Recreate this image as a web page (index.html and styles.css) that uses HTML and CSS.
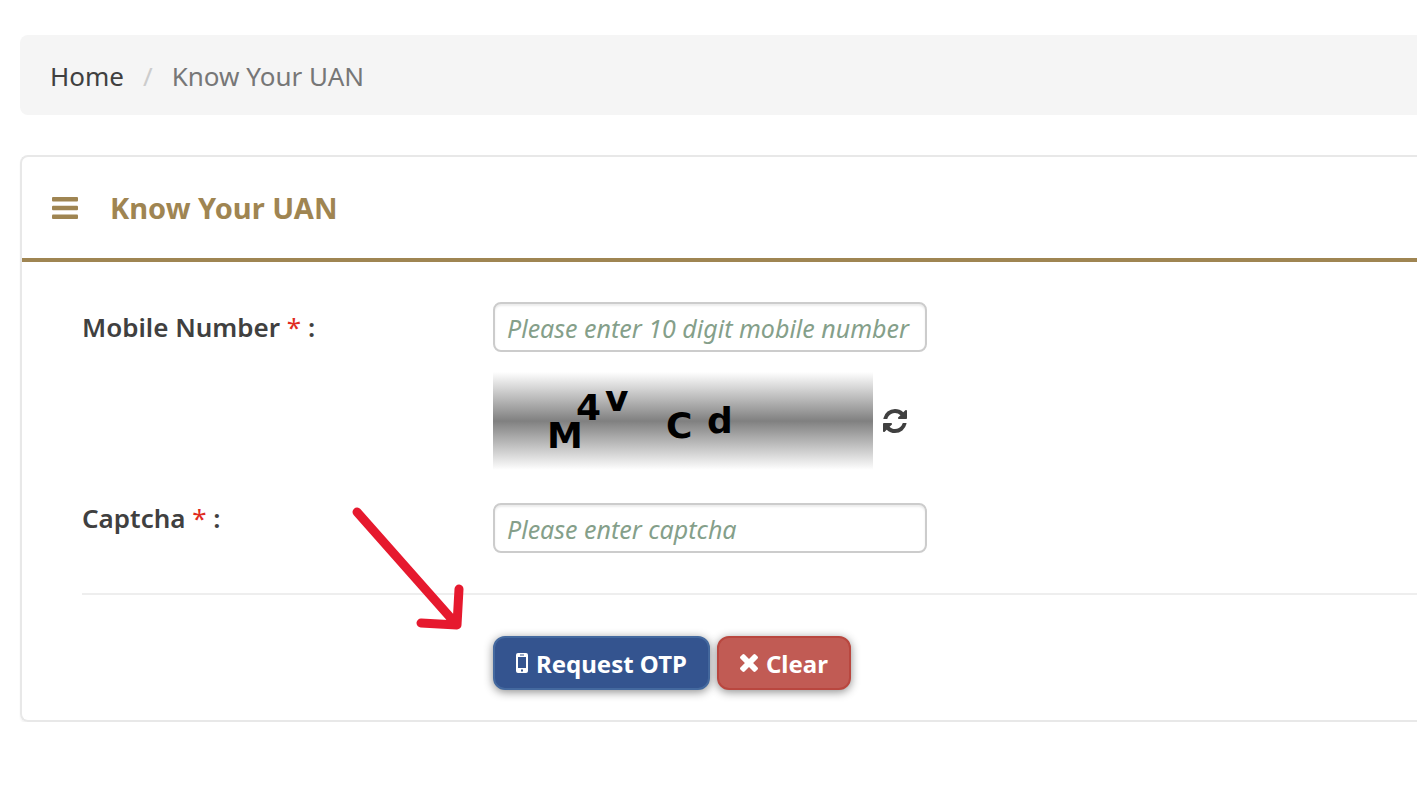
FILE: index.html
```html
<!DOCTYPE html>
<html lang="en">
<head>
    <meta charset="UTF-8">
    <meta name="viewport" content="width=device-width, initial-scale=1.0">
    <title>Know Your UAN</title>
    <link rel="stylesheet" href="styles.css">
</head>
<body>
    <nav class="breadcrumb" aria-label="Breadcrumb">
        <a href="#">Home</a>
        <span class="divider">/</span>
        <span class="current">Know Your UAN</span>
    </nav>

    <main class="panel">
        <header class="panel-heading">
            <svg class="icon-bars" viewBox="0 0 26 22" aria-hidden="true">
                <rect y="0" width="26" height="4.500" rx="1"/>
                <rect y="8.700" width="26" height="4.500" rx="1"/>
                <rect y="17.500" width="26" height="4.500" rx="1"/>
            </svg>
            <h1>Know Your UAN</h1>
        </header>

        <form class="panel-body">
            <div class="form-row">
                <label for="mobile">Mobile Number <span class="required">*</span> :</label>
                <input type="text" id="mobile" placeholder="Please enter 10 digit mobile number">
            </div>

            <div class="form-row captcha-row">
                <div class="captcha">
                    <svg class="captcha-image" viewBox="0 0 380 98" role="img" aria-label="Captcha">
                        <text x="54" y="76">M</text>
                        <text x="83" y="48">4</text>
                        <text x="112" y="39">v</text>
                        <text x="173" y="66">C</text>
                        <text x="214" y="61">d</text>
                    </svg>
                    <button type="button" class="refresh" aria-label="Refresh captcha">
                        <svg viewBox="0 0 1536 1536" aria-hidden="true">
                            <path d="M1511 928q0 5-1 7-64 268-268 434.500t-478 166.500q-146 0-282.500-55t-243.500-157l-129 129q-19 19-45 19t-45-19-19-45v-448q0-26 19-45t45-19h448q26 0 45 19t19 45-19 45l-137 137q71 66 161 102t187 36q134 0 250-65t186-179q11-17 53-117 8-23 30-23h192q13 0 22.500 9.500t9.500 22.500zm25-800v448q0 26-19 45t-45 19h-448q-26 0-45-19t-19-45 19-45l138-138q-148-137-349-137-134 0-250 65t-186 179q-11 17-53 117-8 23-30 23h-199q-13 0-22.500-9.500t-9.500-22.500v-7q65-268 270-434.500t480-166.500q146 0 284 55.500t245 156.500l130-129q19-19 45-19t45 19 19 45z"/>
                        </svg>
                    </button>
                </div>
            </div>

            <div class="form-row captcha-entry">
                <label for="captcha">Captcha <span class="required">*</span> :</label>
                <input type="text" id="captcha" placeholder="Please enter captcha">
            </div>

            <div class="form-actions">
                <button type="button" class="btn btn-primary">
                    <svg class="icon-mobile" viewBox="0 0 12 20" aria-hidden="true">
                        <path fill-rule="evenodd" d="M2 0h8a2 2 0 0 1 2 2v16a2 2 0 0 1-2 2H2a2 2 0 0 1-2-2V2a2 2 0 0 1 2-2zM2 4v11h8V4zM4 1.500v1h4v-1zM5 16.500v2h2v-2z"/>
                    </svg>
                    Request OTP
                </button>
                <button type="reset" class="btn btn-danger">
                    <svg class="icon-times" viewBox="302 366 1188 1188" aria-hidden="true">
                        <path d="M1490 1322q0 40-28 68l-136 136q-28 28-68 28t-68-28l-294-294-294 294q-28 28-68 28t-68-28l-136-136q-28-28-28-68t28-68l294-294-294-294q-28-28-28-68t28-68l136-136q28-28 68-28t68 28l294 294 294-294q28-28 68-28t68 28l136 136q28 28 28 68t-28 68l-294 294 294 294q28 28 28 68z"/>
                    </svg>
                    Clear
                </button>
            </div>
        </form>

        <!-- Pointer to the Request OTP button -->
        <svg class="arrow" viewBox="0 0 112 124" aria-hidden="true">
            <path d="M5 5L105 118M69 116L105 118L107 82"/>
        </svg>
    </main>
</body>
</html>
```

FILE: styles.css
```css
* {
    box-sizing: border-box;
}
body {
    margin: 0;
    padding: 35px 0 0 20px;
    font-family: "Noto Sans", "Open Sans", sans-serif;
    font-size: 26px;
    color: #404040;
    background-color: #fff;
}

/* Breadcrumb */
.breadcrumb {
    display: flex;
    align-items: center;
    height: 80px;
    padding: 2px 30px 0;
    margin-bottom: 40px;
    background-color: #f5f5f5;
    border-radius: 8px 0 0 8px;
}
.breadcrumb a {
    color: #404040;
    text-decoration: none;
}
.divider {
    padding: 0 19px;
    color: #ccc;
}
.current {
    color: #777;
}

/* Panel */
.panel {
    position: relative;
    border: 2px solid #e8e8e8;
    border-right: 0;
    border-radius: 8px 0 0 8px;
    box-shadow: 0 2px 2px rgba(0, 0, 0, 0.05);
}
.panel-heading {
    display: flex;
    align-items: center;
    gap: 32px;
    height: 105px;
    padding: 0 30px;
    color: #9f8552;
    border-bottom: 4px solid #9f8552;
}
.panel-heading h1 {
    margin: 0;
    font-size: 29px;
    font-weight: 700;
}
.icon-bars {
    width: 26px;
    height: 22px;
    fill: currentColor;
}
.panel-body {
    padding: 40px 0 30px 60px;
}

/* Form */
.form-row {
    display: grid;
    grid-template-columns: 411px 434px;
}
.form-row label {
    font-weight: 600;
    line-height: 50px;
}
.required {
    color: #e02b20;
    font-weight: 400;
}
.form-row input {
    width: 100%;
    height: 50px;
    padding: 2px 12px 0;
    font-family: inherit;
    font-size: 25px;
    color: #404040;
    background-color: #fff;
    border: 2px solid #ccc;
    border-radius: 8px;
    box-shadow: inset 0 2px 2px rgba(0, 0, 0, 0.08);
}
.form-row input::placeholder {
    color: #859f8a;
    font-style: italic;
    opacity: 1;
}
.captcha-row {
    margin: 20px 0 23px;
}
.captcha-entry input {
    margin-top: 10px;
}
.captcha {
    grid-column: 2;
    display: flex;
    align-items: center;
    gap: 10px;
}
.captcha-image {
    width: 380px;
    height: 98px;
    background: linear-gradient(#fff, #808080, #fff);
}
.captcha-image text {
    font-family: "DejaVu Sans", sans-serif;
    font-size: 36px;
    font-weight: 700;
    fill: #000;
}
.refresh {
    display: flex;
    padding: 0;
    background: none;
    border: 0;
    cursor: pointer;
}
.refresh svg {
    width: 24px;
    height: 24px;
    fill: #404040;
}

/* Actions */
.form-actions {
    display: flex;
    gap: 7px;
    margin-top: 40px;
    padding: 41px 0 0 411px;
    border-top: 2px solid #eee;
}
.btn {
    display: flex;
    align-items: center;
    gap: 8px;
    height: 54px;
    padding: 0 21px;
    font-family: inherit;
    font-size: 24px;
    font-weight: 700;
    color: #fff;
    border: 2px solid;
    border-radius: 12px;
    box-shadow: 0 2px 10px rgba(0, 0, 0, 0.45);
    cursor: pointer;
}
.btn svg {
    fill: currentColor;
}
.btn-primary {
    background-color: #34548f;
    border-color: #44699f;
}
.btn-danger {
    background-color: #c15b54;
    border-color: #b9473f;
}
.icon-mobile {
    width: 12px;
    height: 20px;
}
.icon-times {
    width: 18px;
    height: 18px;
}

.arrow {
    position: absolute;
    top: 350px;
    left: 330px;
    width: 112px;
    height: 124px;
    fill: none;
    stroke: #e6192e;
    stroke-width: 9px;
    stroke-linecap: round;
    stroke-linejoin: round;
    pointer-events: none;
}
```
